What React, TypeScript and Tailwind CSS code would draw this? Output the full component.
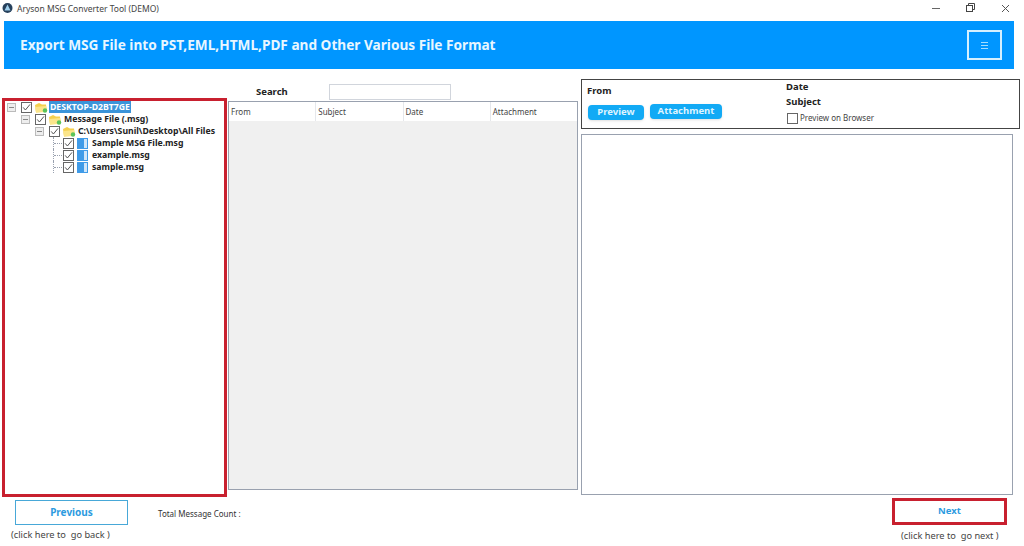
const Check = ({ checked = true }: { checked?: boolean }) => (
  <svg width="11" height="11" viewBox="0 0 11 11" className="shrink-0">
    <rect x="0.5" y="0.5" width="10" height="10" fill="#fff" stroke="#666" />
    {checked && <path d="M2.2 5.4 L4.4 8 L9 2.4" fill="none" stroke="#555" strokeWidth="1" />}
  </svg>
);

const Minus = () => (
  <svg width="9" height="9" viewBox="0 0 9 9" className="shrink-0">
    <rect x="0.5" y="0.5" width="8" height="8" fill="#eee" stroke="#bbb" />
    <path d="M2 4.5 H7" stroke="#888" />
  </svg>
);

const Folder = () => (
  <svg width="14" height="11" viewBox="0 0 14 11" className="-ml-[1px] mr-[1px] shrink-0">
    <path d="M1 3 L5 1 L8 2.5 L12 2.5 L13 9.5 L2 10.5 Z" fill="#f5d04e" />
    <path d="M1 5 L12 4 L13 10 L2 10.5 Z" fill="#fbe58a" />
    <circle cx="11" cy="8.5" r="2.2" fill="#5bc45b" />
  </svg>
);

const FileIcon = () => (
  <svg width="11" height="11" viewBox="0 0 11 11" className="mr-[3px] shrink-0">
    <rect x="0" y="0" width="11" height="11" fill="#3f9be8" />
    <rect x="7" y="1" width="3" height="9" fill="#cfe6fa" />
  </svg>
);

const Row = ({
  indent,
  expander,
  icon,
  label,
  selected,
}: {
  indent: string;
  expander: boolean;
  icon: React.ReactNode;
  label: string;
  selected?: boolean;
}) => (
  <div className={`flex h-[12px] items-center ${indent}`}>
    <div className="flex h-full w-[14px] shrink-0 items-center">
      {expander ? (
        <Minus />
      ) : (
        <div className="ml-[4px] flex h-full w-[9px] items-center border-l border-dotted border-gray-400">
          <div className="h-0 w-full border-t border-dotted border-gray-400" />
        </div>
      )}
    </div>
    <Check />
    <div className="ml-[3px]">{icon}</div>
    <span
      className={`whitespace-nowrap px-[1px] text-[8.7px] leading-[12px] font-bold ${
        selected ? "bg-[#3b94d9] text-white" : "text-[#222]"
      }`}
    >
      {label}
    </span>
  </div>
);

const Head = ({ label, last }: { label: string; last?: boolean }) => (
  <div className={`flex-1 pl-[2px] text-[8px] leading-[20px] text-[#444] ${last ? "" : "border-r border-gray-200"}`}>
    {label}
  </div>
);

export default function App() {
  const bold = "font-bold text-[#222]";
  return (
    <div className="flex h-[546px] w-[1024px] flex-col overflow-hidden bg-white font-['Noto_Sans',sans-serif]">
      <div className="flex h-[21px] items-start pt-[2px]">
        <svg width="11" height="12" viewBox="0 0 11 12" className="ml-[2px]">
          <circle cx="5.5" cy="6" r="5" fill="#26405c" />
          <path d="M5.5 2.5 L8.5 8.5 H2.5 Z" fill="#9fd0ee" />
        </svg>
        <span className="ml-[4px] pt-[1px] text-[8.5px] leading-[12px] text-[#444]">
          Aryson MSG Converter Tool (DEMO)
        </span>
        <div className="mr-[14px] ml-auto flex items-center gap-[25px] pt-[1px] text-[#333]">
          <svg width="9" height="9" viewBox="0 0 9 9"><path d="M0 4.5 H8" stroke="#666" /></svg>
          <svg width="10" height="10" viewBox="0 0 10 10" fill="none" stroke="#444">
            <rect x="0.5" y="2.5" width="6" height="6" />
            <path d="M2.5 2.5 V0.5 H8.5 V6.5 H6.5" />
          </svg>
          <svg width="9" height="9" viewBox="0 0 9 9" fill="none" stroke="#555"><path d="M1 1 L8 8 M8 1 L1 8" /></svg>
        </div>
      </div>

      <div className="ml-[4px] flex h-[48px] w-[1010px] items-center justify-between bg-[#0096ff] pr-[12px] pl-[16px]">
        <h1 className="text-[13.65px] font-bold text-[#e8f6ff]">
          Export MSG File into PST,EML,HTML,PDF and Other Various File Format
        </h1>
        <div className="flex h-[30px] w-[35px] flex-col items-center justify-center gap-[2px] border-2 border-[#d5f0ff]">
          <div className="h-px w-[7px] bg-[#a5dcff]" />
          <div className="h-px w-[7px] bg-[#a5dcff]" />
          <div className="h-px w-[7px] bg-[#a5dcff]" />
        </div>
      </div>

      <div className="flex">
        <div className="mt-[29px] ml-[2px] h-[399px] w-[225px] shrink-0 border-[3px] border-[#c8202f] pl-[2px]">
          <Row indent="" expander icon={<Folder />} label="DESKTOP-D2BT7GE" selected />
          <Row indent="pl-[14px]" expander icon={<Folder />} label="Message File (.msg)" />
          <Row indent="pl-[28px]" expander icon={<Folder />} label="C:\Users\Sunil\Desktop\All Files" />
          <Row indent="pl-[42px]" expander={false} icon={<FileIcon />} label="Sample MSG File.msg" />
          <Row indent="pl-[42px]" expander={false} icon={<FileIcon />} label="example.msg" />
          <Row indent="pl-[42px]" expander={false} icon={<FileIcon />} label="sample.msg" />
        </div>

        <div className="ml-[1px] w-[350px] shrink-0">
          <div className="flex h-[32px] items-end pb-[1px]">
            <span className={`mb-[1px] ml-[28px] w-[73px] text-[9.5px] leading-[14px] ${bold}`}>Search</span>
            <div className="h-[16px] w-[122px] border border-gray-300" />
          </div>
          <div className="h-[389px] border border-gray-400 bg-[#f0f0f0]">
            <div className="flex h-[19px] bg-white">
              <Head label="From" />
              <Head label="Subject" />
              <Head label="Date" />
              <Head label="Attachment" last />
            </div>
          </div>
        </div>

        <div className="ml-[3px] w-[439px] shrink-0">
          <div className="mt-[10px] flex h-[50px] w-[439px] border border-[#444] pl-[5px]">
            <div className="w-[199px]">
              <div className={`mt-[4px] text-[9.5px] leading-[14px] ${bold}`}>From</div>
              <div className="mt-[6px] flex items-start gap-[6px] pl-[1px]">
                <div className="mt-[1px] flex h-[15px] w-[56px] items-center justify-center rounded-[4px] bg-[#12aaf5] text-[9.5px] font-bold text-[#dff4ff] shadow-sm">
                  Preview
                </div>
                <div className="flex h-[15px] w-[72px] items-center justify-center rounded-[4px] bg-[#12aaf5] text-[9.5px] font-bold text-[#dff4ff] shadow-sm">
                  Attachment
                </div>
              </div>
            </div>
            <div>
              <div className={`text-[9.5px] leading-[14px] ${bold}`}>Date</div>
              <div className={`mt-[1px] text-[9.5px] leading-[14px] ${bold}`}>Subject</div>
              <div className="mt-[3px] ml-[1px] flex items-center gap-[2px] text-[8px] text-[#444]">
                <Check checked={false} />
                Preview on Browser
              </div>
            </div>
          </div>
          <div className="mt-[5px] h-[361px] w-[432px] border border-gray-400" />
        </div>
      </div>

      <div className="flex">
        <div className="ml-[15px] w-[113px] shrink-0">
          <div className="mt-[3px] flex h-[25px] items-center justify-center border border-[#48a8d8] text-[10px] font-bold text-[#2d9be0]">
            Previous
          </div>
          <div className="mt-[4px] -ml-[4px] text-[9.25px] leading-[12px] whitespace-pre text-[#444]">(click here to  go back )</div>
        </div>
        <div className="mt-[11px] ml-[30px] text-[8px] leading-[12px] text-[#333]">Total Message Count :</div>
        <div className="mr-[17px] ml-auto w-[115px]">
          <div className="mt-[1px] flex h-[27px] items-center justify-center border-[3px] border-[#c8202f] text-[9.5px] font-bold text-[#2d9be0]">
            Next
          </div>
          <div className="mt-[5px] ml-[9px] text-[9.25px] leading-[12px] whitespace-pre text-[#444]">(click here to  go next )</div>
        </div>
      </div>
    </div>
  );
}
